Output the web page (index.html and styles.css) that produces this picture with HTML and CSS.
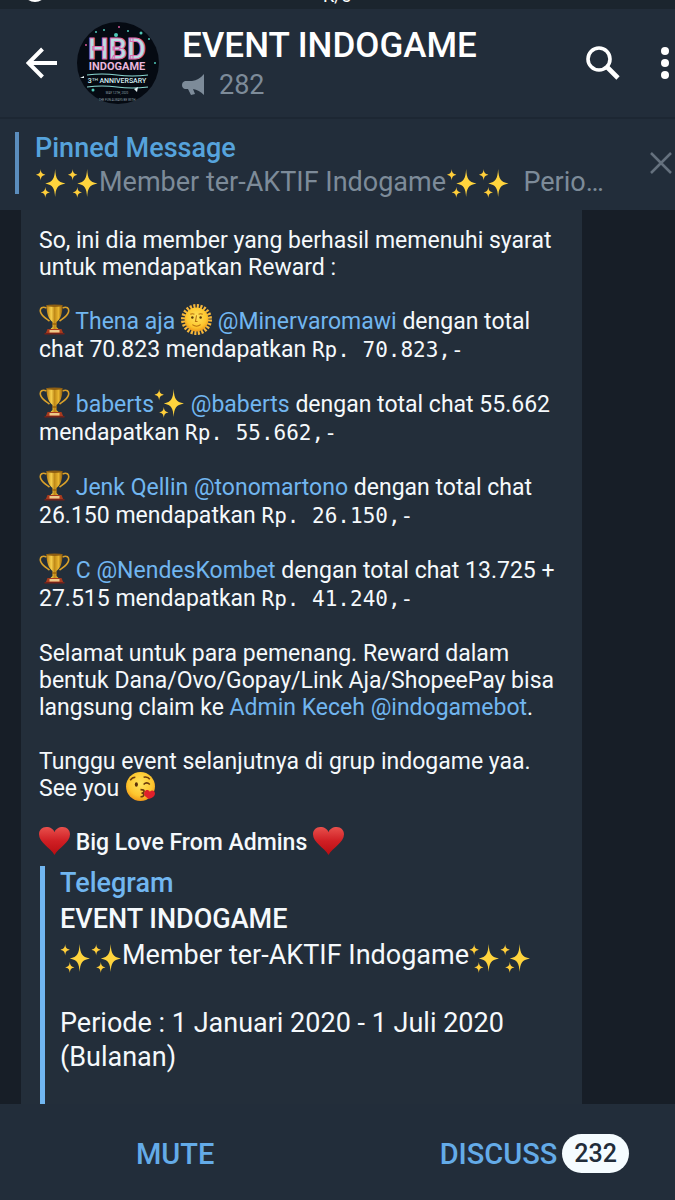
FILE: index.html
```html
<!DOCTYPE html>
<html lang="id">
<head>
    <meta charset="UTF-8">
    <meta name="viewport" content="width=device-width, initial-scale=1.0">
    <title>EVENT INDOGAME</title>
    <link rel="stylesheet" href="styles.css">
</head>
<body>
    <!-- Shared emoji shapes -->
    <svg class="sprite" aria-hidden="true">
        <defs>
            <linearGradient id="gold" x1="0" x2="1" y1="0" y2="0">
                <stop offset="0" stop-color="#b97d12"/>
                <stop offset="0.3" stop-color="#f6cf4c"/>
                <stop offset="0.5" stop-color="#c08a18"/>
                <stop offset="0.75" stop-color="#e9b62f"/>
                <stop offset="1" stop-color="#8f5a0b"/>
            </linearGradient>
            <linearGradient id="red" x1="0" x2="0" y1="0" y2="1">
                <stop offset="0" stop-color="#e8504c"/>
                <stop offset="0.5" stop-color="#d01f24"/>
                <stop offset="1" stop-color="#b80d12"/>
            </linearGradient>
            <radialGradient id="face" cx="0.5" cy="0.4" r="0.6">
                <stop offset="0" stop-color="#ffe45e"/>
                <stop offset="0.7" stop-color="#fdc62e"/>
                <stop offset="1" stop-color="#f09a1a"/>
            </radialGradient>
            <symbol id="trophy" viewBox="0 0 30 31">
                <path d="M7 4C3 2 0 4 1 8c1 4 5 6 9 9M23 4c4-2 7 0 6 4-1 4-5 6-9 9" fill="none" stroke="#d9a02a" stroke-width="1.6"/>
                <path d="M7 1h16c0 9-2 14-6 17v5l3 3H10l3-3v-5C9 15 7 10 7 1z" fill="url(#gold)"/>
                <ellipse cx="15" cy="1.7" rx="8" ry="1.2" fill="#8f5f12"/>
                <path d="M12.500 20h5" stroke="#8f5a0b" stroke-width="1.2"/>
                <path d="M8 25h14l2 5H6z" fill="#a83a1d"/>
                <path d="M10 26h10v2.500H10z" fill="#edc98a"/>
                <path d="M5 29h20v1.500H5z" fill="#74231a"/>
            </symbol>
            <symbol id="sparkles" viewBox="0 0 30 30">
                <path d="M19 2c.7 9.500 2 12.500 10 14-8 1.500-9.300 4.500-10 13-.7-8.500-2-11.500-9.500-13 7.500-1.500 8.800-4.500 9.500-14z" fill="#ffd43d"/>
                <path d="M5 2c.4 4 1.300 4.500 4.500 5.500C6.300 8.500 5.400 9.500 5 13c-.4-3.500-1.300-4.500-4.500-5.500C3.700 6.500 4.600 6 5 2z" fill="#ffce3a"/>
                <path d="M9.500 19c.4 4 1.300 4.500 4.500 5.500-3.200 1-4.100 2-4.500 5.500-.4-3.500-1.300-4.500-4.500-5.500 3.200-1 4.100-1.500 4.500-5.500z" fill="#ffce3a"/>
            </symbol>
            <symbol id="sun" viewBox="0 0 30 30">
                <circle cx="15" cy="15" r="13" fill="none" stroke="#f6b73c" stroke-width="4" stroke-dasharray="2 1.400"/>
                <circle cx="15" cy="15" r="11.500" fill="url(#face)"/>
                <path d="M9 10q2-1 4 0M17 10q2-1 4 0M15 11l-1 6h2M11 20q4 3 8 0" fill="none" stroke="#b9700f" stroke-width="1"/>
                <circle cx="11" cy="13" r="1.200" fill="#5c3a0a"/>
                <circle cx="19" cy="13" r="1.200" fill="#5c3a0a"/>
            </symbol>
            <symbol id="kiss" viewBox="0 0 30 30">
                <circle cx="15" cy="15" r="14" fill="url(#face)"/>
                <path d="M5 9q2-3 5-3M18 6q4-1 6 2M18 13q3-3 6 0" fill="none" stroke="#6b3a0c" stroke-width="1.500"/>
                <ellipse cx="11" cy="13" rx="1.500" ry="2.200" fill="#5a300a"/>
                <path d="M15 18c5 0 4 3 1 3.500 3.500 0 3 3.500-1 3.500" fill="none" stroke="#6b3a0c" stroke-width="1.500"/>
                <path d="M23 27c-5-3-5-5-4-7s4-2 5 0c2-2 5-1 5 2 0 2-2 4-6 5z" fill="#e0202b"/>
            </symbol>
            <symbol id="heart" viewBox="0 0 30 30">
                <path d="M15 29C11 22 0 17 0 9c0-4 3-7 7-7 4 0 7 2 8 5 1-3 4-5 8-5 4 0 7 3 7 7 0 8-11 13-15 20z" fill="url(#red)"/>
            </symbol>
        </defs>
    </svg>

    <div class="app">
        <div class="status-bar">
            <svg class="status-dot" width="26" height="26" viewBox="0 0 26 26" aria-hidden="true"><circle cx="13" cy="12" r="12" fill="#fff"/></svg>
            <span class="status-speed">K/s</span>
        </div>

        <header class="header">
            <button class="icon-btn" aria-label="Back">
                <svg width="32" height="32" viewBox="0 0 32 32"><path d="M31 16H3M16.500 2 2.500 16l14 14" fill="none" stroke="#fff" stroke-width="4"/></svg>
            </button>
            <svg class="avatar" viewBox="0 0 82 82" role="img" aria-label="HBD Indogame">
                <circle cx="41" cy="41" r="41" fill="#050a12"/>
                <g fill="#4fc9b8">
                    <circle cx="39" cy="13" r="2"/><circle cx="64" cy="11" r="1.500"/><circle cx="19" cy="10" r="1"/>
                    <circle cx="72" cy="17" r="1"/><circle cx="27" cy="8" r="1"/><circle cx="51" cy="9" r="1"/>
                    <circle cx="16" cy="68" r="1.500"/><circle cx="78" cy="41" r="1"/>
                </g>
                <circle cx="42" cy="5" r="1" fill="#d85a9c"/>
                <circle cx="9" cy="23" r="1" fill="#d85a9c"/>
                <text x="40" y="37" class="logo-big">HBD</text>
                <text x="40" y="48" class="logo-mid">INDOGAME</text>
                <path d="M10 53q15-2 30 0t31 0M10 65q15-2 30 0t31 0" fill="none" stroke="#8ad8d2" stroke-width="1.200"/>
                <text x="40" y="61" class="logo-small">3&#7488;&#7476; ANNIVERSARY</text>
                <path d="M61 65l-4 2 3 3zM3 56l4-2v2z" fill="#e6f3f4"/>
                <text x="40" y="72" class="logo-tiny">MAY 12TH, 2020</text>
                <text x="40" y="79" class="logo-tiny">THE FUN ALWAYS BE WITH</text>
            </svg>
            <div class="channel">
                <h1>EVENT INDOGAME</h1>
                <div class="subscribers">
                    <svg width="23" height="22" viewBox="0 0 23 22" aria-hidden="true"><path d="M22 0v21q-5-5-11-6l2 5-4 1-3-6H3q-3-1-3-4t3-4h7q7-1 12-7z" fill="#7d8b99"/></svg>
                    <span>282</span>
                </div>
            </div>
            <button class="icon-btn" aria-label="Search">
                <svg width="36" height="36" viewBox="0 0 36 36"><circle cx="14" cy="14" r="11" fill="none" stroke="#fff" stroke-width="3.600"/><path d="M22 22 33 33" stroke="#fff" stroke-width="4.600"/></svg>
            </button>
            <button class="icon-btn menu-btn" aria-label="Menu">
                <svg width="8" height="32" viewBox="0 0 8 32"><g fill="#fff"><circle cx="4" cy="4" r="4"/><circle cx="4" cy="16" r="4"/><circle cx="4" cy="28" r="4"/></g></svg>
            </button>
        </header>

        <section class="pinned">
            <div class="pinned-body">
                <h2>Pinned Message</h2>
                <p><svg class="emoji"><use href="#sparkles"/></svg><svg class="emoji"><use href="#sparkles"/></svg>Member ter-AKTIF Indogame<svg class="emoji"><use href="#sparkles"/></svg><svg class="emoji"><use href="#sparkles"/></svg>&nbsp; Perio…</p>
            </div>
            <button class="icon-btn" aria-label="Close">
                <svg width="22" height="22" viewBox="0 0 22 22"><path d="M1 1l20 20M21 1 1 21" stroke="#65717e" stroke-width="2.500"/></svg>
            </button>
        </section>

        <main class="chat">
            <article class="message">
                <p>So, ini dia member yang berhasil memenuhi syarat untuk mendapatkan Reward :</p>
                <p class="reward"><svg class="emoji"><use href="#trophy"/></svg> <a href="#">Thena aja <svg class="emoji"><use href="#sun"/></svg></a> <a href="#">@Minervaromawi</a> dengan total chat 70.823 mendapatkan <code>Rp. 70.823,-</code></p>
                <p class="reward"><svg class="emoji"><use href="#trophy"/></svg> <a href="#">baberts<svg class="emoji"><use href="#sparkles"/></svg></a> <a href="#">@baberts</a> dengan total chat 55.662 mendapatkan <code>Rp. 55.662,-</code></p>
                <p class="reward"><svg class="emoji"><use href="#trophy"/></svg> <a href="#">Jenk Qellin</a> <a href="#">@tonomartono</a> dengan total chat 26.150 mendapatkan <code>Rp. 26.150,-</code></p>
                <p class="reward"><svg class="emoji"><use href="#trophy"/></svg> <a href="#">C</a> <a href="#">@NendesKombet</a> dengan total chat 13.725 + 27.515 mendapatkan <code>Rp. 41.240,-</code></p>
                <p>Selamat untuk para pemenang. Reward dalam bentuk Dana/Ovo/Gopay/Link Aja/ShopeePay bisa langsung claim ke <a href="#">Admin Keceh</a> <a href="#">@indogamebot</a>.</p>
                <p>Tunggu event selanjutnya di grup indogame yaa.<br>See you <svg class="emoji"><use href="#kiss"/></svg></p>
                <p class="love"><svg class="emoji"><use href="#heart"/></svg> Big Love From Admins <svg class="emoji"><use href="#heart"/></svg></p>
                <div class="preview">
                    <a class="preview-site" href="#">Telegram</a>
                    <h3>EVENT INDOGAME</h3>
                    <p><svg class="emoji"><use href="#sparkles"/></svg><svg class="emoji"><use href="#sparkles"/></svg>Member ter-AKTIF Indogame<svg class="emoji"><use href="#sparkles"/></svg><svg class="emoji"><use href="#sparkles"/></svg></p>
                    <p>Periode : 1 Januari 2020 - 1 Juli 2020 (Bulanan)</p>
                </div>
            </article>
        </main>

        <footer class="footer">
            <button class="footer-btn">MUTE</button>
            <button class="footer-btn">DISCUSS <span class="badge">232</span></button>
        </footer>
    </div>
</body>
</html>
```
FILE: styles.css
```css
* {
    margin: 0;
    padding: 0;
    box-sizing: border-box;
}

body {
    font-family: Roboto, sans-serif;
    background-color: #171e27;
    color: #f5f9fc;
}

a {
    color: #71b6f0;
    text-decoration: none;
}

button {
    font-family: inherit;
    background: none;
    border: none;
    cursor: pointer;
}

.sprite {
    position: absolute;
    width: 0;
    height: 0;
}

.app {
    display: flex;
    flex-direction: column;
    height: 100vh;
}

.status-bar {
    display: flex;
    align-items: flex-end;
    gap: 275px;
    height: 9px;
    padding: 0 22px 5px;
    background-color: #1b252e;
    overflow: hidden;
    flex-shrink: 0;
}

.status-dot {
    flex-shrink: 0;
}

.status-speed {
    font-size: 18px;
    line-height: 16px;
    color: #fff;
}

.header {
    display: flex;
    align-items: center;
    height: 110px;
    padding: 0 6px 0 26px;
    background-color: #222d3a;
    border-bottom: 2px solid #1d2733;
    flex-shrink: 0;
}

.icon-btn {
    display: flex;
    flex-shrink: 0;
}

.avatar {
    width: 82px;
    height: 82px;
    margin: 0 23px 0 19px;
    flex-shrink: 0;
}

.logo-big,
.logo-mid,
.logo-small,
.logo-tiny {
    text-anchor: middle;
    fill: #d7eef2;
}

.logo-big {
    font-size: 29px;
    font-weight: 700;
    fill: #b9dfe3;
    stroke: #dc6bb0;
    stroke-width: 1px;
}

.logo-mid {
    font-size: 11px;
    font-weight: 700;
    fill: #e9b6dc;
}

.logo-small {
    font-size: 7px;
    font-weight: 500;
}

.logo-tiny {
    font-size: 3px;
    fill: #8fa3ab;
}

.channel {
    flex: 1;
    min-width: 0;
    padding-top: 4px;
}

.channel h1 {
    font-size: 35px;
    font-weight: 500;
    line-height: 40px;
    color: #fff;
    white-space: nowrap;
}

.subscribers {
    display: flex;
    align-items: center;
    gap: 14px;
    font-size: 27px;
    line-height: 38px;
    color: #7d8b99;
}

.menu-btn {
    margin-left: 40px;
}

.pinned {
    display: flex;
    align-items: center;
    justify-content: space-between;
    height: 91px;
    padding: 0 3px 3px 15px;
    background-color: #222d3a;
    flex-shrink: 0;
}

.pinned-body {
    padding-left: 16px;
    border-left: 4px solid #5b8dbd;
    white-space: nowrap;
    height: 62px;
}

.pinned h2 {
    font-size: 27px;
    font-weight: 500;
    line-height: 32px;
    color: #56a3dc;
}

.pinned p {
    font-size: 27px;
    line-height: 36px;
    color: #7d8b99;
}

.emoji {
    width: 31px;
    height: 31px;
    margin: -8px 0;
    vertical-align: 2px;
}

.pinned .emoji {
    width: 32px;
    vertical-align: 1px;
}

.preview .emoji {
    vertical-align: -1px;
}

.chat {
    flex: 1;
    min-height: 0;
    overflow: hidden;
}

.message {
    display: flex;
    flex-direction: column;
    gap: 27px;
    min-height: 100%;
    margin: 0 93px 0 21px;
    padding: 17px 18px 0;
    background-color: #232e3a;
    font-size: 23px;
    line-height: 27px;
}

.reward {
    line-height: 28px;
}

.reward code {
    font-family: "DejaVu Sans Mono", monospace;
    font-size: 21px;
    line-height: 21px;
}

.love {
    font-weight: 500;
}

.preview {
    flex: 1;
    margin-top: -17px;
    padding: 0 0 34px 15px;
    margin-left: 1px;
    border-left: 5px solid #71b6f0;
    font-size: 27px;
    line-height: 34px;
}

.preview-site {
    display: block;
    font-weight: 500;
    line-height: 34px;
}

.preview h3 {
    font-size: 27px;
    font-weight: 500;
    line-height: 38px;
}

.preview p + p {
    margin-top: 34px;
}

.footer {
    display: flex;
    align-items: center;
    justify-content: space-between;
    height: 96px;
    padding: 3px 46px 0 136px;
    background-color: #222d3a;
    flex-shrink: 0;
}

.footer-btn {
    display: flex;
    align-items: center;
    gap: 5px;
    font-size: 29px;
    font-weight: 500;
    color: #64abe8;
}

.badge {
    padding: 0 12px;
    border-radius: 20px;
    background-color: #f5fcff;
    color: #222d3a;
    font-size: 25px;
    line-height: 39px;
}
```
